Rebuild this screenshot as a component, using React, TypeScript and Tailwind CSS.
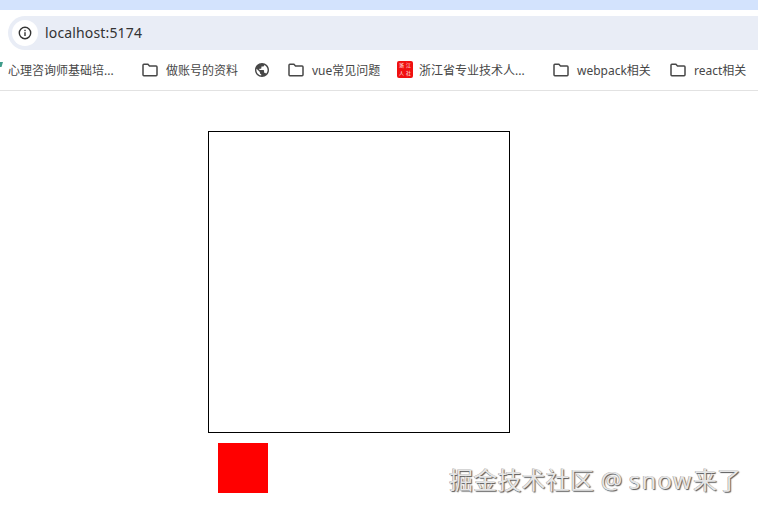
import React from "react";

const CJK = '"Noto Sans", "Noto Sans CJK SC", sans-serif';

function Folder() {
  return (
    <svg width="18" height="18" viewBox="0 0 18 18" fill="none" className="shrink-0">
      <path d="M2 4.2c0-.5.4-.9.9-.9h4l1.6 1.7h6.6c.5 0 .9.4.9.9v7.9c0 .5-.4.9-.9.9H2.9c-.5 0-.9-.4-.9-.9V4.2z" stroke="#474747" strokeWidth="1.5" />
    </svg>
  );
}

function Globe() {
  return (
    <svg width="16" height="16" viewBox="0 0 24 24" className="shrink-0">
      <path fill="#474747" d="M12 1.5C6.2 1.5 1.5 6.2 1.5 12S6.2 22.5 12 22.5 22.5 17.8 22.5 12 17.8 1.5 12 1.5zM10.8 20.3c-4-.6-7.2-4-7.2-8.3 0-.7.1-1.3.2-1.9l5 5v1.1c0 1.1 1 2 2 2v2.1zm7.2-2.7c-.3-.8-1-1.4-1.900-1.400h-1v-3.100c0-.6-.5-1-1-1H8V10h2.100c.6 0 1-.5 1-1V6.900h2.100c1.100 0 2-.9 2-2v-.4c3.100 1.200 5.200 4.200 5.200 7.500 0 2.200-.9 4.200-2.400 5.600z" />
    </svg>
  );
}

function Stamp() {
  return (
    <span className="w-4 h-[17px] rounded-[2px] bg-[#f01010] shrink-0 grid grid-cols-2 place-items-center text-white text-[5px] leading-none px-px">
      <span>浙</span><span>江</span><span>人</span><span>社</span>
    </span>
  );
}

function Mark({ label, icon, cls }: { label: string; icon?: React.ReactNode; cls: string }) {
  return (
    <div className={`flex items-center shrink-0 ${cls}`}>
      {icon}
      {label && <span className="text-[12px] leading-none text-[#474747] whitespace-nowrap pt-[2px]">{label}</span>}
    </div>
  );
}

export default function App() {
  return (
    <div className="relative w-[758px] h-[511px] bg-white overflow-hidden" style={{ fontFamily: CJK }}>
      <div className="h-[10px] bg-[#d3e3fd]" />
      <div className="h-[40px] pt-[6px] pl-[8px] bg-white">
        <div className="h-[34px] rounded-l-[17px] bg-[#e9edf6] flex items-center pl-[4px]">
          <div className="w-[26px] h-[26px] rounded-full bg-white flex items-center justify-center">
            <svg width="14" height="14" viewBox="0 0 14 14" fill="none">
              <circle cx="7" cy="7" r="5.700" stroke="#333" strokeWidth="1.400" />
              <rect x="6.300" y="6.200" width="1.400" height="3.800" fill="#333" />
              <rect x="6.300" y="3.800" width="1.400" height="1.400" fill="#333" />
            </svg>
          </div>
          <span className="ml-[7px] text-[14px] leading-none tracking-[0.15px] text-[#333]">localhost:5174</span>
        </div>
      </div>
      <div className="h-[41px] border-b border-[#e2e2e2] flex items-center bg-white text-[#474747] pb-[1px]">
        <svg width="3" height="6" viewBox="0 0 3 6" className="shrink-0 mb-[10px]">
          <path d="M0 0h3L1.500 5H0z" fill="#3f9c8a" />
        </svg>
        <Mark cls="w-[133px] ml-[5px]" label="心理咨询师基础培..." />
        <Mark cls="w-[113px] gap-[7px]" icon={<Folder />} label="做账号的资料" />
        <Mark cls="w-[33px]" icon={<Globe />} label="" />
        <Mark cls="w-[110px] gap-[7px]" icon={<Folder />} label="vue常见问题" />
        <Mark cls="w-[155px] gap-[6px]" icon={<Stamp />} label="浙江省专业技术人..." />
        <Mark cls="w-[117px] gap-[7px]" icon={<Folder />} label="webpack相关" />
        <Mark cls="gap-[7px]" icon={<Folder />} label="react相关" />
      </div>
      <div className="pt-[40px] pl-[208px]">
        <div className="w-[302px] h-[302px] border border-black bg-white" />
        <div className="w-[50px] h-[50px] bg-[#ff0000] mt-[10px] ml-[10px]" />
      </div>
      <div
        className="absolute left-[449px] top-[465px] text-[24px] leading-[30px] tracking-[0.2px] text-[#e6e6e6] whitespace-nowrap"
        style={{ textShadow: "1px 1px 1px #555, -0.5px -0.5px 0.5px #999" }}
      >
        掘金技术社区 @ <span className="tracking-[1.2px]">snow</span>来了
      </div>
    </div>
  );
}
